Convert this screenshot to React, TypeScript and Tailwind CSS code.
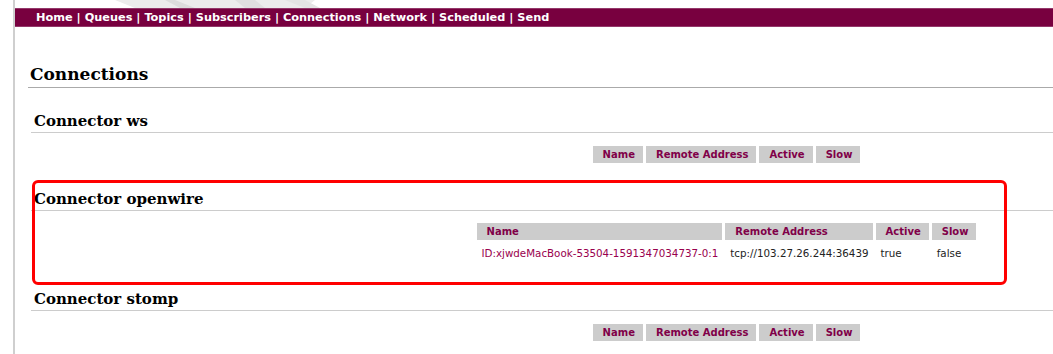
import React from "react";

type Conn = { name: string; remote: string; active: string; slow: string };

const connectors: { title: string; rows: Conn[] }[] = [
  { title: "ws", rows: [] },
  {
    title: "openwire",
    rows: [
      {
        name: "ID:xjwdeMacBook-53504-1591347034737-0:1",
        remote: "tcp://103.27.26.244:36439",
        active: "true",
        slow: "false",
      },
    ],
  },
  { title: "stomp", rows: [] },
];

const navItems = ["Home", "Queues", "Topics", "Subscribers", "Connections", "Network", "Scheduled", "Send"];

function ConnTable({ rows }: { rows: Conn[] }) {
  return (
    <div className="flex justify-center pl-[369px]">
      <table className="border-separate border-spacing-x-[3px] border-spacing-y-[3px] font-['DejaVu_Sans',Verdana,sans-serif]">
        <thead>
          <tr>
            {["Name", "Remote Address", "Active", "Slow"].map((h) => (
              <th
                key={h}
                className="bg-[#cccccc] pl-[10px] pr-[8px] py-[1px] text-left text-[10px] font-bold leading-[15px] text-[#800048]"
              >
                {h}
              </th>
            ))}
          </tr>
        </thead>
        <tbody>
          {rows.map((r) => (
            <tr key={r.name} className="text-[10.3px] leading-[21px] text-[#222]">
              <td className="pl-[5px] pr-[4px]">
                <a className="text-[#99004d]">{r.name}</a>
              </td>
              <td className="pl-[5px] pr-[4px]">{r.remote}</td>
              <td className="pl-[5px] pr-[4px]">{r.active}</td>
              <td className="pl-[5px] pr-[4px]">{r.slow}</td>
            </tr>
          ))}
        </tbody>
      </table>
    </div>
  );
}

export default function App() {
  return (
    <div className="relative h-[354px] w-[1053px] overflow-hidden bg-white">
      <div className="ml-[13px] h-full border-l-[2px] border-[#cfcfcf]">
        {/* faded banner remnant */}
        <div className="h-[8px] overflow-hidden">
          <svg width="400" height="8" className="ml-[90px]">
            <path d="M10 0 L210 0 L200 8 L30 8 Z" fill="#ececec" />
            <path d="M60 0 L70 0 L90 8 L75 8 Z" fill="#dcdcdc" />
            <path d="M130 0 L150 0 L160 8 L140 8 Z" fill="#e0e0e0" />
            <path d="M180 0 L200 0 L215 8 L200 8 Z" fill="#e4e4e4" />
          </svg>
        </div>

        <nav className="h-[19px] border-y border-[#93386a] bg-[#78003f] pl-[21px] font-['DejaVu_Sans',Verdana,sans-serif] text-[11.3px] font-bold leading-[17px] text-white">
          {navItems.map((n, i) => (
            <span key={n}>
              {i > 0 && " | "}
              <a>{n}</a>
            </span>
          ))}
        </nav>

        <div className="pl-[13px] font-['DejaVu_Serif',Georgia,serif]">
          <h1 className="mt-[36px] border-b border-[#aaaaaa] pb-[2px] pl-[2px] text-[17px] font-bold leading-[22px] text-black">
            Connections
          </h1>

          <div className="pl-[3px]">
            {connectors.map((c, i) => (
              <section key={c.title}>
                <h2
                  className={`border-b border-[#cccccc] pb-[1px] pl-[3px] text-[15px] font-bold leading-[20px] text-black ${
                    i === 0 ? "mt-[23px]" : c.rows.length ? "mt-[23px]" : "mt-[22px]"
                  }`}
                >
                  Connector {c.title}
                </h2>
                <div className={i === 1 ? "mt-[9px]" : "mt-[10px]"}>
                  <ConnTable rows={c.rows} />
                </div>
              </section>
            ))}
          </div>
        </div>
      </div>

      {/* annotation box */}
      <div className="pointer-events-none absolute left-[32px] top-[180px] h-[105px] w-[975px] rounded-[6px] border-[3px] border-[#ff0000]" />
    </div>
  );
}
